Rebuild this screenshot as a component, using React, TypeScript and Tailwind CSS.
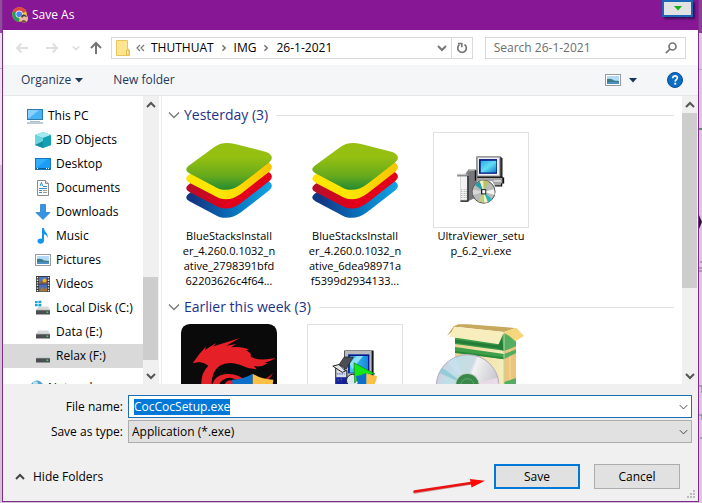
import { useEffect, useRef, type ReactNode } from "react";

type TreeEntry = { label: string; icon: ReactNode; selected?: boolean };
type FileEntry = { lines: string[]; icon: ReactNode; framed?: boolean };

/* ---------- small icons ---------- */

function Chevron({ dir, className }: { dir: "up" | "down" | "right"; className?: string }) {
  const paths = {
    up: "M1 7 L5 3 L9 7",
    down: "M1 3 L5 7 L9 3",
    right: "M3 1.5 L6.5 5 L3 8.5",
  };
  return (
    <svg viewBox="0 0 10 10" className={className ?? "h-2.5 w-2.5"} fill="none" stroke="currentColor" strokeWidth="2">
      <path d={paths[dir]} />
    </svg>
  );
}

function ThinChevron({ className }: { className?: string }) {
  return (
    <svg viewBox="0 0 12 8" className={className ?? "h-2 w-3"} fill="none" stroke="currentColor" strokeWidth="1.3">
      <path d="M1 1.5 L6 6.5 L11 1.5" />
    </svg>
  );
}

function Triangle() {
  return (
    <svg viewBox="0 0 8 5" className="h-[5px] w-2" fill="currentColor">
      <path d="M0 0 H8 L4 4.5 Z" />
    </svg>
  );
}

function ChromeIcon() {
  return (
    <svg viewBox="0 0 16 16" className="h-4 w-4">
      <circle cx="7.5" cy="7.5" r="7.3" fill="#f5c32c" />
      <path d="M7.5 7.5 L1 4.2 A7.3 7.3 0 0 1 14.2 4.5 Z" fill="#dc4a3d" />
      <path d="M7.5 7.5 L1.1 4 A7.3 7.3 0 0 0 7 14.8 Z" fill="#2c9a5b" />
      <circle cx="7.2" cy="7.2" r="3.6" fill="#e8eefc" />
      <circle cx="7.2" cy="7.2" r="2.8" fill="#4285f4" />
      <circle cx="12" cy="11.5" r="4" fill="#e4bd9e" />
      <path d="M9 9 Q12 6 15 9.5 L14 10 L12 9 L10 11 Z" fill="#4c3a34" />
      <path d="M9 15 L11 13 L13 13.5 L15 15.5 Z" fill="#6e4b3f" />
    </svg>
  );
}

const PcIcon = (
  <svg viewBox="0 0 16 16" className="h-4 w-4">
    <rect x=".5" y="1.5" width="15" height="10" fill="#49b4f5" stroke="#2b7cad" />
    <path d="M1 11 V2 H12 Z" fill="#8bd0fb" />
    <path d="M3 13 H13 V14 H3Z" fill="#a8c2d1" />
    <path d="M0 15 H16" stroke="#7d98a8" />
  </svg>
);

const CubeIcon = (
  <svg viewBox="0 0 16 16" className="h-4 w-4">
    <path d="M8 0 L16 3 V13 L8 16 L0 13 V3 Z" fill="#34bccb" />
    <path d="M0 3 L8 0 L16 3 L8 6 Z" fill="#a4e9ee" />
    <path d="M8 6 L16 3 V13 L8 16 Z" fill="#14a0b4" />
    <path d="M0 3 L8 6 V10 L0 13 Z" fill="#6cd6de" />
    <path d="M0 13 L8 9 V16 Z" fill="#158fa0" />
  </svg>
);

const DesktopIcon = (
  <svg viewBox="0 0 16 16" className="h-4 w-4">
    <rect x=".5" y="2.5" width="15" height="11" fill="#1b9cf6" stroke="#1576bd" />
    <path d="M1 12 V3 H13 Z" fill="#33aefc" />
    <path d="M1 12.5 H15" stroke="#0b5c99" />
    <path d="M2 12.5 H3 M11 12.5 H12 M13 12.5 H14" stroke="#fff" />
  </svg>
);

const DocumentIcon = (
  <svg viewBox="0 0 16 16" className="h-4 w-4">
    <path d="M2.5 .5 H10.5 L13.5 3.5 V15.5 H2.5 Z" fill="#fcfcfc" stroke="#8c8c8c" />
    <path d="M10.5 .5 V3.5 H13.5" fill="#ddd" stroke="#8c8c8c" />
    <path d="M5 6 L6.5 2.5 L7.5 6 M8 6.5 H12 M4 8.5 H12" stroke="#2f8fd0" fill="none" />
    <path d="M4 10.5 H7 M4 12.5 H7" stroke="#2f8fd0" />
    <path d="M8 10.5 H12 M8 12.5 H12" stroke="#9a9a9a" />
  </svg>
);

const DownloadIcon = (
  <svg viewBox="0 0 16 16" className="h-4 w-4">
    <path d="M5.5 .5 H10.5 V8.5 H15 L8 15.5 L1 8.5 H5.5 Z" fill="#3594e6" stroke="#2b7fc9" strokeWidth=".8" />
  </svg>
);

const MusicIcon = (
  <svg viewBox="0 0 16 16" className="h-4 w-4">
    <path d="M7 0 H9 C9 4 13.5 4.5 12.5 10 C12 7.5 10.5 6.5 9 6.2 V12.5 C9 17 2 16.5 2.5 13 C3 10.5 5.5 10 7 11 Z" fill="#1296ea" />
  </svg>
);

const PictureIcon = (
  <svg viewBox="0 0 16 16" className="h-4 w-4">
    <rect x=".5" y="2.5" width="15" height="11" fill="#fff" stroke="#969ca2" />
    <rect x="2" y="4" width="12" height="8" fill="#b4dcf7" />
    <path d="M2 7 Q7 6 9 8.5 L14 9 V12 H2 Z" fill="#3c7c86" />
    <path d="M2 10 H14 V12 H2Z" fill="#4b8fc6" />
  </svg>
);

const VideoIcon = (
  <svg viewBox="0 0 16 16" className="h-4 w-4">
    <rect x="1" y="0" width="14" height="16" fill="#3c3c40" />
    <path d="M2.5 1 V16 M13.5 1 V16" stroke="#e6e6e6" strokeWidth="1.4" strokeDasharray="1.3 1.3" />
    <rect x="4" y="1" width="8" height="6.5" fill="#5076c8" />
    <rect x="4" y="8.5" width="8" height="7" fill="#4a6db8" />
    <path d="M4 7.5 L7 4 L9 5 L12 3 V7.5 Z" fill="#8e5c3a" />
    <circle cx="9.5" cy="4.5" r="2" fill="#e5b72d" />
    <path d="M4 15.5 L7 11 L9 13 L12 12 V15.5 Z" fill="#a4763d" />
  </svg>
);

function DriveIcon({ windows }: { windows?: boolean }) {
  return (
    <svg viewBox="0 0 16 16" className="h-4 w-4">
      <path d="M3.5 6.5 H13 L15 10 H1 Z" fill="#d6d8d9" />
      <rect x="1" y="10" width="14" height="4.5" rx=".6" fill="#4b4e50" />
      <path d="M1 10.3 H15" stroke="#86898b" strokeWidth=".7" />
      <rect x="11.5" y="11.5" width="1.8" height="1.5" fill="#38e04c" />
      {windows && (
        <g>
          <rect width="7" height="7" fill="#fff" />
          <path d="M0 1 H2.7 V3.2 H0Z M3.4 .7 H6.4 V3.2 H3.4Z M0 3.9 H2.7 V6.2 H0Z M3.4 3.9 H6.4 V6.6 H3.4Z" fill="#17a8dc" />
        </g>
      )}
    </svg>
  );
}

const NetworkIcon = (
  <svg viewBox="0 0 16 16" className="h-4 w-4">
    <circle cx="10" cy="7" r="6.5" fill="#4fa3cc" />
    <path d="M6 2 Q10 0 11 3 Q10 6 6 6 Z" fill="#b8e2ee" />
    <rect x="1" y="8" width="9" height="6" fill="#3d9be0" />
  </svg>
);

function Shield({ x, y }: { x: number; y: number }) {
  return (
    <g transform={`translate(${x} ${y})`}>
      <path d="M0 18 Q35 17 62 0 V110 Q5 80 0 18 Z" fill="#0c70cb" />
      <path d="M124 18 Q89 17 62 0 V110 Q119 80 124 18 Z" fill="#fcc045" />
    </g>
  );
}

/* ---------- file thumbnails ---------- */

function BlueStacksIcon({ id }: { id: string }) {
  const layer =
    "M88 213 L165 157 Q190 137 228 147 L322 171 Q350 184 331 202 L246 268 Q203 299 162 272 L91 235 Q74 225 88 213 Z";
  return (
    <svg viewBox="66 111 288 288" className="h-24 w-24">
      <defs>
        <linearGradient id={`${id}-g`} x1="0" y1="0" x2="0" y2="1">
          <stop offset=".3" stopColor="#95c011" />
          <stop offset=".7" stopColor="#67aa1c" />
          <stop offset="1" stopColor="#218c32" />
        </linearGradient>
        <linearGradient id={`${id}-b`} x1="0" x2="1">
          <stop offset=".1" stopColor="#123885" />
          <stop offset=".55" stopColor="#0872bd" />
          <stop offset="1" stopColor="#13a5e5" />
        </linearGradient>
        <linearGradient id={`${id}-r`} x1="0" x2="1">
          <stop offset="0" stopColor="#b50f2b" />
          <stop offset=".5" stopColor="#e2001a" />
        </linearGradient>
        <linearGradient id={`${id}-y`} x1="0" x2="1">
          <stop offset=".4" stopColor="#ffe600" />
          <stop offset="1" stopColor="#f8c400" />
        </linearGradient>
      </defs>
      <path d={layer} transform="translate(0 84)" fill={`url(#${id}-b)`} />
      <path d={layer} transform="translate(0 56)" fill={`url(#${id}-r)`} />
      <path d={layer} transform="translate(0 28)" fill={`url(#${id}-y)`} />
      <path d={layer} fill={`url(#${id}-g)`} />
    </svg>
  );
}

const SetupIcon = (
  <svg viewBox="9 6 288 288" className="h-full w-full">
    <defs>
      <linearGradient id="crt" x1="0" y1="0" x2="1" y2="1">
        <stop offset="0" stopColor="#2fa9e6" />
        <stop offset=".5" stopColor="#62dcf4" />
        <stop offset="1" stopColor="#0d7cc9" />
      </linearGradient>
    </defs>
    <path d="M139 78 H213 L219 84 V144 H139 Z" fill="#2b2b2e" />
    <path d="M139 78 H212 V141 H139 Z" fill="#a6a6a8" />
    <path d="M144 82 H208 V136 H144 Z" fill="#f1f1f1" />
    <rect x="147" y="86" width="55" height="45" fill="#00127d" />
    <rect x="152" y="91" width="48" height="36" fill="url(#crt)" />
    <path d="M133 143 H218 V166 H195 L187 154 H133 Z" fill="#a5a5a8" />
    <path d="M139 141 H219 M195 168 H216 V160" stroke="#111" strokeWidth="4" fill="none" />
    <path d="M192 151 H214 V155 H192Z" fill="#ededed" />
    <rect x="218" y="142" width="6" height="19" fill="#111" />
    <path d="M80 132 H104 L115 117 H143 L138 206 H118 L112 216 H90 V139 H80 Z" fill="#89898c" />
    <path d="M114 126 L140 117 L133 206 L115 214 Z" fill="#77777b" />
    <rect x="90" y="139" width="22" height="74" fill="#f2f2f2" />
    <path d="M94 178 V210 M102 178 V210 M108 178 V210" stroke="#b9b9bb" strokeWidth="4" strokeDasharray="3 3" />
    <path d="M113 138 V215 H90" fill="none" stroke="#19191b" strokeWidth="4" />
    <path d="M80 133 H108 M117 119 H139" stroke="#c9c9cb" strokeWidth="4" />
    <path d="M136 120 V152" stroke="#111" strokeWidth="4" />
    <circle cx="161" cy="186" r="35" fill="#b9babb" stroke="#4c5152" strokeWidth="3" />
    <path d="M161 186 L135 165 L149 153 Z" fill="#259eab" />
    <path d="M161 186 L149 153 L160 151 Z" fill="#f0f3c0" />
    <path d="M161 186 L162 151 L178 155 Z" fill="#bfc16b" />
    <path d="M161 186 L193 178 L195 196 Z" fill="#f4f4f4" />
    <path d="M161 186 L187 209 L174 218 Z" fill="#29b8ba" />
    <path d="M161 186 L174 218 L163 220 Z" fill="#effac0" />
    <path d="M161 186 L160 220 L143 215 Z" fill="#c5ca85" />
    <path d="M161 186 L128 196 L128 179 Z" fill="#d9d9d9" />
    <rect x="153" y="178" width="16" height="16" fill="#222" />
    <rect x="157" y="181" width="9" height="10" fill="#fff" />
  </svg>
);

const DragonIcon = (
  <svg viewBox="3 12 288 288" className="h-24 w-24">
    <rect x="3" y="12" width="288" height="288" rx="26" fill="#0a0a0a" />
    <path
      d="M38 130 L58 102 L79 79 L75 90 L108 69 L101 79 L180 54 L139 77 L169 72 L153 82 Q186 78 207 89 L198 91 Q218 101 211 109 Q235 125 286 114 Q270 126 253 127 L263 130 Q245 143 221 138 L230 148 Q203 146 179 134 Q145 122 119 137 Q92 156 95 200 H64 Q61 160 85 137 Q74 128 57 126 Z"
      fill="#e52027"
    />
    <path d="M96 200 Q100 166 138 162 Q169 160 190 176 L172 181 Q149 166 129 180 Q116 188 118 200 Z" fill="#e52027" />
    <path d="M134 192 Q145 175 161 184 L155 200 H132 Z" fill="#e52027" />
    <path d="M240 184 Q260 176 279 160 Q270 180 249 190 Z" fill="#b71b20" />
    <Shield x={156} y={161} />
  </svg>
);

const InstallIcon = (
  <svg viewBox="441 312 288 288" className="h-full w-full">
    <defs>
      <linearGradient id="crt2" x1="0" x2="1">
        <stop offset="0" stopColor="#47c8f8" />
        <stop offset="1" stopColor="#1689d8" />
      </linearGradient>
    </defs>
    <path d="M552 390 H642 V520 H552 Z" fill="#101418" />
    <path d="M554 392 H636 V518 H554 Z" fill="#b7b9bd" />
    <rect x="564" y="402" width="65" height="58" fill="#001894" />
    <rect x="569" y="407" width="56" height="51" fill="url(#crt2)" />
    <path d="M590 407 H610 L576 448 L569 430 Z" fill="#8edcfb" />
    <path d="M526 443 L560 452 V520 H526 Z" fill="#d9dee9" stroke="#111" strokeWidth="3" />
    <rect x="527" y="472" width="33" height="48" fill="#13219b" />
    <path d="M530 462 H553 M534 478 V486 M543 476 V484" stroke="#5864b7" strokeWidth="4" strokeDasharray="4 3" />
    <path d="M517 438 L536 433 L556 453 L546 457 Z" fill="#e4e5e8" stroke="#222" strokeWidth="3" />
    <path d="M552 410 H580 L558 447 L536 434 Z" fill="#4a4d52" stroke="#171717" strokeWidth="2" />
    <circle cx="578" cy="482" r="19" fill="#dce8ef" stroke="#222" strokeWidth="3" />
    <path d="M582 428 L646 462 L606 463 L584 490 Z" fill="#13e918" stroke="#0a7c12" strokeWidth="2" />
    <g transform="translate(588 459) scale(.52)">
      <Shield x={0} y={0} />
    </g>
  </svg>
);

const BoxIcon = (
  <svg viewBox="99 102 288 288" className="h-24 w-24">
    <defs>
      <linearGradient id="disc" x1="0" y1="0" x2="1" y2=".4">
        <stop offset="0" stopColor="#d9c4dc" />
        <stop offset=".3" stopColor="#bfdfe8" />
        <stop offset=".55" stopColor="#cbdbe2" />
        <stop offset=".6" stopColor="#f2f2f4" />
        <stop offset="1" stopColor="#c4c4ca" />
      </linearGradient>
      <linearGradient id="cream" x1="0" x2="1">
        <stop offset="0" stopColor="#e8d28c" />
        <stop offset="1" stopColor="#f6edbd" />
      </linearGradient>
    </defs>
    <path d="M165 140 L312 128 V390 H165 Z" fill="url(#cream)" />
    <path d="M312 126 L348 140 V390 H312 Z" fill="#edc47c" />
    <path d="M330 180 V390" stroke="#f6dda1" strokeWidth="3" />
    <path d="M165 144 L312 132 V182 L165 162 Z" fill="#3b9a45" />
    <path d="M165 171 L312 192 V208 L165 186 Z" fill="#3f9f4b" />
    <path d="M165 183 L312 202 V208 L165 189 Z" fill="#288a3b" />
    <path d="M312 130 L348 148 V169 L312 183 Z M312 192 L348 178 V190 L312 207 Z M312 276 L348 264 V390 H312 Z" fill="#55ad61" />
    <path d="M165 149 L294 166 L303 134 L312 183 L297 176 L165 158 Z" fill="#237c38" />
    <path d="M141 137 L161 109 L175 103 H203 L347 114 L312 126 L175 111 Z" fill="#c7a85c" />
    <path d="M162 110 L312 126 L296 163 L148 140 Z" fill="#f7edbd" />
    <path d="M314 125 L349 113 L372 138 L346 154 Z" fill="#f5d67d" />
    <path d="M312 127 V282" stroke="#b8d9a0" strokeWidth="3" />
    <circle cx="203" cy="288" r="94" fill="url(#disc)" stroke="#b6a9bd" strokeWidth="3" />
    <path d="M203 288 L118 248 L127 233 Z" fill="#94cbd8" />
    <path d="M203 288 L291 263 L296 282 Z" fill="#ead9e6" />
    <path d="M203 288 L143 216 L164 203 Z" fill="#cddff0" opacity=".7" />
    <circle cx="202" cy="286" r="36" fill="#398849" stroke="#d4d8d6" strokeWidth="3" />
    <circle cx="202" cy="286" r="20" fill="none" stroke="#60aa6a" strokeWidth="3" />
  </svg>
);

/* ---------- data ---------- */

const tree: TreeEntry[] = [
  { label: "3D Objects", icon: CubeIcon },
  { label: "Desktop", icon: DesktopIcon },
  { label: "Documents", icon: DocumentIcon },
  { label: "Downloads", icon: DownloadIcon },
  { label: "Music", icon: MusicIcon },
  { label: "Pictures", icon: PictureIcon },
  { label: "Videos", icon: VideoIcon },
  { label: "Local Disk (C:)", icon: <DriveIcon windows /> },
  { label: "Data (E:)", icon: <DriveIcon /> },
  { label: "Relax (F:)", icon: <DriveIcon />, selected: true },
];

const groups: { title: string; files: FileEntry[] }[] = [
  {
    title: "Yesterday (3)",
    files: [
      {
        lines: ["BlueStacksInstall", "er_4.260.0.1032_n", "ative_2798391bfd", "62203626c4f64..."],
        icon: <BlueStacksIcon id="bs1" />,
      },
      {
        lines: ["BlueStacksInstall", "er_4.260.0.1032_n", "ative_6dea98971a", "f5399d2934133..."],
        icon: <BlueStacksIcon id="bs2" />,
      },
      { lines: ["UltraViewer_setu", "p_6.2_vi.exe"], icon: SetupIcon, framed: true },
    ],
  },
  {
    title: "Earlier this week (3)",
    files: [
      { lines: [], icon: DragonIcon },
      { lines: [], icon: InstallIcon, framed: true },
      { lines: [], icon: BoxIcon },
    ],
  },
];

/* ---------- parts ---------- */

function ScrollBar({ children }: { children: ReactNode }) {
  return (
    <div className="flex w-4 shrink-0 flex-col bg-[#f0f0f0] text-[#555]">
      <button aria-label="Scroll up" className="flex h-[17px] items-center justify-center">
        <Chevron dir="up" />
      </button>
      <div className="flex flex-1 flex-col">{children}</div>
      <button aria-label="Scroll down" className="flex h-[17px] items-center justify-center">
        <Chevron dir="down" />
      </button>
    </div>
  );
}

function NavBar() {
  return (
    <div className="flex h-[35px] shrink-0 items-center bg-white px-3">
      <button aria-label="Back" className="w-[30px] text-[#dedede]">
        <svg viewBox="0 0 14 12" className="h-3 w-3.5" fill="none" stroke="currentColor" strokeWidth="1.8">
          <path d="M13 6 H2 M6.5 1.5 L2 6 L6.5 10.5" />
        </svg>
      </button>
      <button aria-label="Forward" className="w-[27px] text-[#dedede]">
        <svg viewBox="0 0 14 12" className="h-3 w-3.5" fill="none" stroke="currentColor" strokeWidth="1.8">
          <path d="M1 6 H12 M7.5 1.5 L12 6 L7.5 10.5" />
        </svg>
      </button>
      <button aria-label="Recent locations" className="w-[18px] text-[#dedede]">
        <Chevron dir="down" className="h-2 w-2" />
      </button>
      <button aria-label="Up" className="w-[21px] text-[#757575]">
        <svg viewBox="0 0 12 14" className="h-3.5 w-3" fill="none" stroke="currentColor" strokeWidth="2">
          <path d="M6 13 V2 M1 7 L6 2 L11 7" />
        </svg>
      </button>

      <div className="flex h-[22px] flex-[361] items-center border border-[#d9d9d9]">
        <svg viewBox="0 0 14 16" className="ml-1 h-4 w-3.5 shrink-0">
          <path d="M.5 .5 H11.5 V9 L13.5 10 V15.5 H.5 Z" fill="#ffe58f" stroke="#e9c65a" />
          <path d="M10.5 15 V10 H13 V15Z" fill="#fff0b8" stroke="#e3b94a" />
        </svg>
        <svg viewBox="0 0 9 8" className="ml-1.5 h-2 w-[9px] text-[#777]" fill="none" stroke="currentColor" strokeWidth="1.2">
          <path d="M4 1 L1 4 L4 7 M8 1 L5 4 L8 7" />
        </svg>
        <nav aria-label="Path" className="flex flex-1 items-center gap-1.5 pl-1.5 text-black">
          <button>THUTHUAT</button>
          <Chevron dir="right" className="h-2 w-2 text-[#777]" />
          <button>IMG</button>
          <Chevron dir="right" className="h-2 w-2 text-[#777]" />
          <button>26-1-2021</button>
        </nav>
        <button aria-label="Previous locations" className="px-1 text-[#777]">
          <Chevron dir="down" />
        </button>
        <button aria-label="Refresh" className="flex h-full w-[21px] items-center justify-center border-l border-[#d9d9d9] text-[#777]">
          <svg viewBox="0 0 12 12" className="h-3 w-3" fill="none" stroke="currentColor" strokeWidth="1.7">
            <path d="M8.5 2.5 A4.3 4.3 0 1 1 3.5 2.6 M2 1.5 H5.8 V5.3" />
          </svg>
        </button>
      </div>

      <div className="ml-3 flex h-[22px] flex-[192] items-center border border-[#d9d9d9] pl-2">
        <input
          aria-label="Search"
          placeholder="Search 26-1-2021"
          className="w-full min-w-0 flex-1 bg-transparent outline-none placeholder:text-[#6d6d6d]"
        />
        <button aria-label="Start search" className="px-2 text-[#777]">
          <svg viewBox="0 0 12 12" className="h-3 w-3" fill="none" stroke="currentColor" strokeWidth="1.7">
            <circle cx="7.5" cy="4.5" r="3.5" />
            <path d="M5 7 L.8 11.2" />
          </svg>
        </button>
      </div>
    </div>
  );
}

function ToolBar() {
  return (
    <div className="flex h-[31px] shrink-0 items-center border-b border-[#e5e7e9] bg-[#f5f6f7] pr-[15px] pl-[18px] text-[#1e395b]">
      <button className="flex items-center gap-1">
        Organize <Triangle />
      </button>
      <button className="ml-[30px]">New folder</button>
      <div className="flex-1" />
      <button aria-label="Change view">{PictureIcon}</button>
      <button aria-label="More view options" className="ml-2 text-[#17335a]">
        <Triangle />
      </button>
      <button aria-label="Help" className="ml-[30px]">
        <svg viewBox="0 0 16 16" className="h-4 w-4">
          <circle cx="8" cy="8" r="7.5" fill="#0a6cc4" stroke="#084f91" />
          <path d="M5.7 6.2 C5.7 3 10.6 3.2 10.3 6 C10.2 7.5 8.2 7.7 8.2 9.5" fill="none" stroke="#fff" strokeWidth="1.7" />
          <rect x="7.3" y="10.7" width="1.9" height="1.9" fill="#fff" />
        </svg>
      </button>
    </div>
  );
}

function FolderTree() {
  return (
    <div className="min-w-0 flex-1 overflow-hidden pt-2 text-black">
      <button className="flex h-6 w-full items-center gap-[5px] pl-6">
        {PcIcon}
        This PC
      </button>
      <ul>
        {tree.map((item) => (
          <li key={item.label}>
            <button
              className={`flex h-6 w-full items-center gap-[5px] pl-8 whitespace-nowrap ${item.selected ? "bg-[#d9d9d9]" : ""}`}
            >
              {item.icon}
              {item.label}
            </button>
          </li>
        ))}
      </ul>
      <button className="mt-2 flex h-6 w-full items-center gap-[5px] pl-6">
        {NetworkIcon}
        Network
      </button>
    </div>
  );
}

function FileList() {
  return (
    <div className="min-w-0 flex-1 overflow-hidden pt-0.5">
      {groups.map((group) => (
        <section key={group.title} className="mb-0.5">
          <h2 className="flex h-[34px] items-center pr-2 pl-1.5 text-sm text-[#1e3287]">
            <button className="flex items-center gap-1 whitespace-nowrap">
              <span className="text-[#777]">
                <ThinChevron />
              </span>
              {group.title}
            </button>
            <span className="ml-2 h-px flex-1 bg-[#e2e2e2]" />
          </h2>
          <div className="flex flex-wrap pl-1">
            {group.files.map((file, i) => (
              <figure key={i} className="flex w-[126px] flex-col items-center">
                <div className={file.framed ? "h-24 w-24 border border-[#e0e0e0]" : "h-24 w-24"}>{file.icon}</div>
                <figcaption className="text-center text-[11px] leading-[15px] text-black">
                  {file.lines.map((line) => (
                    <span key={line} className="block">
                      {line}
                    </span>
                  ))}
                </figcaption>
              </figure>
            ))}
          </div>
        </section>
      ))}
    </div>
  );
}

function Footer() {
  const nameRef = useRef<HTMLInputElement>(null);

  useEffect(() => {
    nameRef.current?.focus();
    nameRef.current?.select();
  }, []);

  return (
    <div className="relative shrink-0 bg-[#f0f0f0] pt-[11px] text-black">
      <div className="grid grid-cols-[120px_1fr] items-center gap-x-[5px] gap-y-0.5 pr-1.5">
        <label htmlFor="file-name" className="text-right">
          File name:
        </label>
        <div className="flex h-[23px] items-center border border-[#1a6fb5] bg-white pr-[3px] pl-[5px]">
          <input
            id="file-name"
            ref={nameRef}
            defaultValue="CocCocSetup.exe"
            className="min-w-0 flex-1 leading-4 outline-none selection:bg-[#0078d7] selection:text-white"
          />
          <button aria-label="Show file names" className="text-[#444]">
            <ThinChevron className="h-1.5 w-[9px]" />
          </button>
        </div>
        <label htmlFor="file-type" className="text-right">
          Save as type:
        </label>
        <div className="relative">
          <select id="file-type" className="block h-[23px] w-full appearance-none border border-[#adadad] bg-[#e1e1e1] pl-[3px] outline-none">
            <option>Application (*.exe)</option>
          </select>
          <span className="pointer-events-none absolute inset-y-0 right-1 flex items-center text-[#444]">
            <ThinChevron className="h-1.5 w-[9px]" />
          </span>
        </div>
      </div>

      <div className="flex items-center pt-[21px] pr-[18px] pb-3 pl-3">
        <button className="flex items-center gap-2">
          <Chevron dir="up" className="h-2.5 w-2.5 text-[#444]" />
          Hide Folders
        </button>
        <div className="flex-1" />
        <button className="h-[25px] w-[86px] border-2 border-[#0078d7] bg-[#e1e1e1]">Save</button>
        <button className="ml-3.5 h-[25px] w-[86px] border border-[#adadad] bg-[#e1e1e1]">Cancel</button>
      </div>

      {/* red pointer towards the Save button */}
      <svg viewBox="0 0 74 18" className="absolute right-[211px] bottom-1 h-[18px] w-[74px]">
        <path d="M1.5 13.5 L58 4.5" stroke="#8d1010" strokeWidth="2.5" strokeLinecap="round" opacity=".4" />
        <path d="M1.5 12.5 L58 4" stroke="#ed1212" strokeWidth="2.4" strokeLinecap="round" />
        <path d="M57 0 L72 1.8 L58.5 8.5 Z" fill="#ff0808" />
      </svg>

      <svg viewBox="0 0 9 9" className="absolute right-0.5 bottom-0.5 h-[9px] w-[9px]" fill="#bcbcbc">
        <path d="M6 0h2v2h-2z M3 3h2v2h-2z M6 3h2v2h-2z M0 6h2v2h-2z M3 6h2v2h-2z M6 6h2v2h-2z" />
      </svg>
    </div>
  );
}

export default function App() {
  return (
    <div className="flex h-screen w-full overflow-hidden bg-[#cfc6d1] pb-px font-['Open_Sans','Noto_Sans',sans-serif] text-xs leading-4">
      <div className="w-0.5 shrink-0">
        <div className="h-[33px] bg-[#934ba0]" />
        <div className="h-9 border-b border-[#b8b8b8] bg-[#e6e2e6]" />
        <div className="h-24 bg-[#e9e5e9]" />
      </div>

      <main className="flex min-w-0 flex-1 flex-col border-x border-b border-[#80298c] bg-white">
        <header className="relative flex h-[30px] shrink-0 items-center gap-1 bg-[#871794] pl-[9px] text-white">
          <ChromeIcon />
          <h1>Save As</h1>
          <svg viewBox="0 0 12 12" className="absolute top-[7px] right-[9px] h-3 w-3" stroke="#c5a0cc" strokeWidth="1.2">
            <path d="M1 1 L11 11 M11 1 L1 11" />
          </svg>
          <button
            aria-label="Expand panel"
            className="absolute top-0 right-[5px] flex h-[17px] w-[31px] items-center justify-center border-2 border-[#1c66b5] bg-[#e2e2e2] text-[#16ad16] shadow-[2px_2px_2px_#3b0d58]"
          >
            <Triangle />
          </button>
        </header>

        <NavBar />
        <ToolBar />

        <div className="flex min-h-0 flex-1 bg-white">
          <aside className="flex w-[158px] shrink-0 border-r-2 border-white">
            <FolderTree />
            <ScrollBar>
              <div className="grow-[164]" />
              <div className="mr-px grow-[83] bg-[#cdcdcd]" />
              <div className="grow-[7]" />
            </ScrollBar>
          </aside>
          <div className="w-px bg-[#ececec]" />
          <FileList />
          <ScrollBar>
            <div className="mr-px grow-[175] bg-[#cdcdcd]" />
            <div className="grow-[79]" />
          </ScrollBar>
        </div>

        <Footer />
      </main>

      <svg viewBox="0 0 3 502" preserveAspectRatio="none" className="h-full w-[3px] shrink-0">
        <rect width="3" height="502" fill="#dcc8dd" />
        <rect width="3" height="33" fill="#8d3e99" />
        <rect y="69" width="3" height="1" fill="#b3a3b4" />
        <rect y="128" width="3" height="2" fill="#4a9165" />
        <path d="M0 215 L3 222 L0 229 Z" fill="#251a2b" />
        <path d="M1 262 H3 M0 268 H3 M0 271 H3" stroke="#80707f" />
        <path d="M0 386 H3 V393 M0 415 H3 V420 M1 438 H3" stroke="#618173" fill="none" />
      </svg>
    </div>
  );
}
